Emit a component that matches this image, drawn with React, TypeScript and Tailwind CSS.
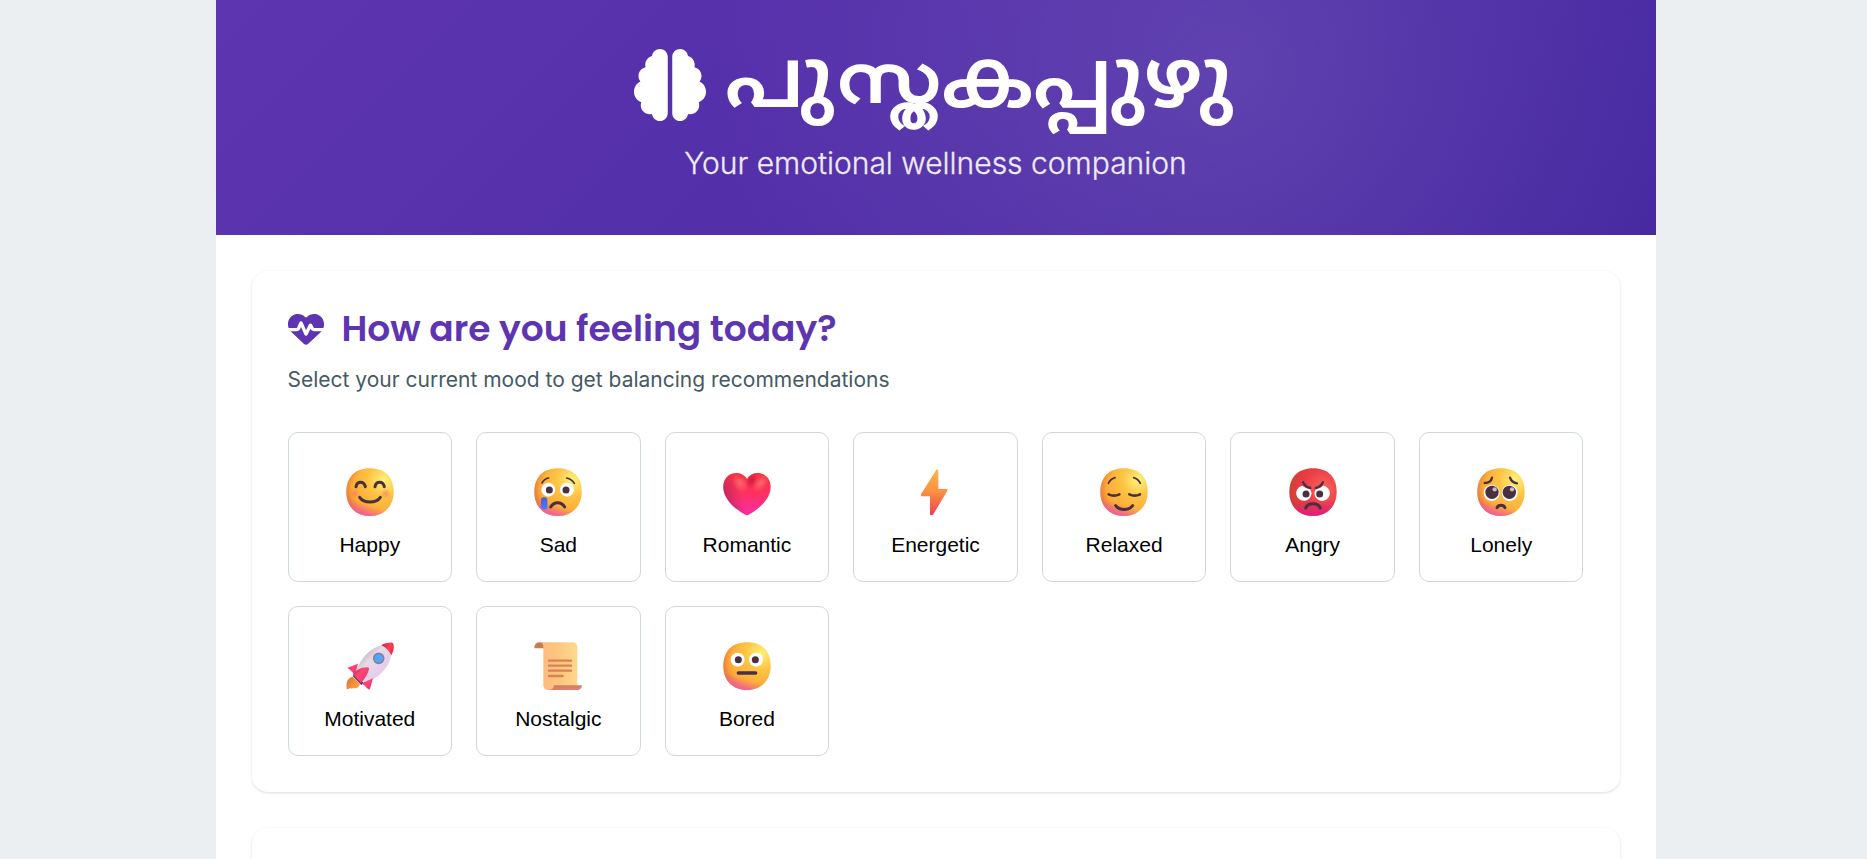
import type { ReactNode } from 'react';
import { FaBrain, FaHeartPulse } from 'react-icons/fa6';

const INK = '#4a2f42';

function Defs() {
  return (
    <svg width="0" height="0" className="absolute">
      <defs>
        <radialGradient id="face" cx="0.8" cy="0.24" r="0.95">
          <stop offset="0" stopColor="#fff27a" />
          <stop offset="0.36" stopColor="#fdc344" />
          <stop offset="0.75" stopColor="#fdaa36" />
          <stop offset="1" stopColor="#ee8c3a" />
        </radialGradient>
        <radialGradient id="angry" cx="0.72" cy="0.42" r="0.75">
          <stop offset="0" stopColor="#f9655a" />
          <stop offset="0.55" stopColor="#ec3d48" />
          <stop offset="1" stopColor="#cf4030" />
        </radialGradient>
        <linearGradient id="chin" x1="0.58" y1="0.7" x2="0.48" y2="1">
          <stop offset="0.3" stopColor="#f0608a" stopOpacity="0" />
          <stop offset="1" stopColor="#f0609c" stopOpacity="0.95" />
        </linearGradient>
        <linearGradient id="angryChin" x1="0.5" y1="0.65" x2="0.5" y2="1">
          <stop offset="0" stopColor="#e0205a" stopOpacity="0" />
          <stop offset="1" stopColor="#e0208a" />
        </linearGradient>
        <radialGradient id="side" cx="0.64" cy="0.45" r="0.68">
          <stop offset="0.74" stopColor="#e0663c" stopOpacity="0" />
          <stop offset="1" stopColor="#dc5f45" stopOpacity="0.6" />
        </radialGradient>
        <radialGradient id="blush">
          <stop offset="0" stopColor="#ff7a68" stopOpacity="0.75" />
          <stop offset="1" stopColor="#ff7a68" stopOpacity="0" />
        </radialGradient>
        <linearGradient id="tear" x1="0" y1="0" x2="0" y2="1">
          <stop offset="0" stopColor="#3f63d8" />
          <stop offset="1" stopColor="#4a78ff" />
        </linearGradient>
        <linearGradient id="heart" x1="0.5" y1="0" x2="0.5" y2="1">
          <stop offset="0" stopColor="#f9343f" />
          <stop offset="0.5" stopColor="#fc3062" />
          <stop offset="1" stopColor="#f82fa8" />
        </linearGradient>
        <radialGradient id="heartGlow">
          <stop offset="0" stopColor="#ff6b70" />
          <stop offset="1" stopColor="#ff5a66" stopOpacity="0" />
        </radialGradient>
        <linearGradient id="heartEdge" x1="0" y1="0.5" x2="0.35" y2="0.4">
          <stop offset="0" stopColor="#b0205a" stopOpacity="0.75" />
          <stop offset="1" stopColor="#c0285a" stopOpacity="0" />
        </linearGradient>
        <radialGradient id="heartDip">
          <stop offset="0" stopColor="#b8163c" stopOpacity="0.75" />
          <stop offset="1" stopColor="#c01840" stopOpacity="0" />
        </radialGradient>
        <linearGradient id="bolt" x1="0.5" y1="0" x2="0.5" y2="1">
          <stop offset="0" stopColor="#fbb84a" />
          <stop offset="0.5" stopColor="#fb8e42" />
          <stop offset="1" stopColor="#ee3f50" />
        </linearGradient>
        <linearGradient id="hull" x1="0.2" y1="0.2" x2="0.8" y2="0.8">
          <stop offset="0" stopColor="#bfb6bd" />
          <stop offset="0.35" stopColor="#e6dbe6" />
          <stop offset="1" stopColor="#e6c8ee" />
        </linearGradient>
        <linearGradient id="fin" x1="0" y1="0" x2="1" y2="0.7">
          <stop offset="0" stopColor="#c92a52" />
          <stop offset="0.5" stopColor="#fb4a70" />
          <stop offset="1" stopColor="#f8258a" />
        </linearGradient>
        <linearGradient id="nose" x1="0" y1="0.3" x2="1" y2="0.7">
          <stop offset="0" stopColor="#cf1f3c" />
          <stop offset="0.55" stopColor="#fb4458" />
          <stop offset="1" stopColor="#e8253f" />
        </linearGradient>
        <linearGradient id="flame" x1="0" y1="0" x2="1" y2="0.6">
          <stop offset="0" stopColor="#e2702c" />
          <stop offset="1" stopColor="#ffa13c" />
        </linearGradient>
        <linearGradient id="paper" x1="0" y1="0.5" x2="1" y2="0.35">
          <stop offset="0" stopColor="#fdb980" />
          <stop offset="0.5" stopColor="#fdc680" />
          <stop offset="1" stopColor="#ffd98c" />
        </linearGradient>
        <linearGradient id="roll" x1="0" y1="0" x2="1" y2="1">
          <stop offset="0" stopColor="#cf7a52" />
          <stop offset="1" stopColor="#e2847c" />
        </linearGradient>
      </defs>
    </svg>
  );
}

const HEAD = 'M72 1C118 1 143 28 143 72C143 117 112 144 72 144C31 144 1 117 1 72C1 28 27 1 72 1Z';

function Glyph({ children }: { children: ReactNode }) {
  return (
    <svg viewBox="0 0 144 144" className="size-12" fill="none" strokeLinecap="round" strokeLinejoin="round">
      {children}
    </svg>
  );
}

function Face({ children }: { children: ReactNode }) {
  return (
    <Glyph>
      <path d={HEAD} fill="url(#face)" />
      <path d={HEAD} fill="url(#side)" />
      <path d={HEAD} fill="url(#chin)" />
      {children}
    </Glyph>
  );
}

const Happy = () => (
  <Face>
    <circle cx="26" cy="77" r="15" fill="url(#blush)" />
    <circle cx="119" cy="77" r="15" fill="url(#blush)" />
    <g stroke={INK} strokeWidth="9">
      <path d="M30 56C33 38 54 38 58 56" />
      <path d="M87 56C90 38 111 38 115 56" />
      <path d="M41 88C54 107 90 107 103 88" />
    </g>
  </Face>
);

const Sad = () => (
  <Face>
    <circle cx="43" cy="65" r="21" fill="#fff" />
    <circle cx="99" cy="65" r="21" fill="#fff" />
    <circle cx="46" cy="66" r="10.5" fill={INK} />
    <circle cx="96" cy="66" r="10.5" fill={INK} />
    <g stroke={INK} strokeWidth="5">
      <path d="M24 45Q31 32 44 30" />
      <path d="M98 30Q113 33 121 46" />
    </g>
    <path d="M50 117C60 100 82 100 92 117" stroke={INK} strokeWidth="9" />
    <rect x="21" y="88" width="19" height="36" rx="8" fill="url(#tear)" />
  </Face>
);

const HEART = 'M72 32C79 21 91 15 104 15C127 15 143 33 143 56C143 92 110 122 76 141Q72 143 68 141C34 122 1 92 1 56C1 33 17 15 40 15C53 15 65 21 72 32Z';
const Romantic = () => (
  <Glyph>
    <path d={HEART} fill="url(#heart)" />
    <path d={HEART} fill="url(#heartEdge)" />
    <clipPath id="heartClip">
      <path d={HEART} />
    </clipPath>
    <g clipPath="url(#heartClip)">
      <ellipse cx="86" cy="36" rx="17" ry="28" fill="url(#heartDip)" transform="rotate(24 86 36)" />
      <ellipse cx="52" cy="46" rx="22" ry="32" fill="url(#heartGlow)" transform="rotate(-35 52 46)" />
      <ellipse cx="114" cy="45" rx="20" ry="32" fill="url(#heartGlow)" transform="rotate(38 114 45)" />
    </g>
  </Glyph>
);

const Energetic = () => (
  <Glyph>
    <path d="M76 5Q78 3 80 5Q82 6 82 9V63H107Q111 64 109 68L67 139Q65 142 61 142Q57 142 57 139V85H32Q28 84 30 79Z" fill="url(#bolt)" />
  </Glyph>
);

const Relaxed = () => (
  <Face>
    <g stroke={INK} strokeWidth="5">
      <path d="M25 46Q31 33 45 29" />
      <path d="M101 29Q115 33 121 46" />
    </g>
    <g stroke={INK} strokeWidth="8">
      <path d="M26 79Q42 87 58 79" />
      <path d="M88 79Q104 87 120 79" />
    </g>
    <path d="M47 113C58 128 86 128 98 113" stroke={INK} strokeWidth="9" />
  </Face>
);

const Angry = () => (
  <Glyph>
    <path d={HEAD} fill="url(#angry)" />
    <path d={HEAD} fill="url(#angryChin)" />
    <path d="M40 53Q50 62 64 64Q70 74 66 84A23 23 0 1 1 40 53Z" fill="#fff" />
    <path d="M103 53Q94 62 80 64Q74 74 78 84A23 23 0 1 0 103 53Z" fill="#fff" />
    <circle cx="51" cy="78" r="10.5" fill={INK} />
    <circle cx="92" cy="78" r="10.5" fill={INK} />
    <g stroke={INK} strokeWidth="7">
      <path d="M42 43Q49 57 64 60" />
      <path d="M102 43Q95 57 80 60" />
    </g>
    <path d="M50 120C58 103 86 103 94 120" stroke={INK} strokeWidth="9" />
  </Glyph>
);

const Lonely = () => (
  <Face>
    <circle cx="44" cy="75" r="24" fill="#fff" />
    <circle cx="98" cy="75" r="24" fill="#fff" />
    <circle cx="45" cy="73" r="20" fill={INK} />
    <circle cx="97" cy="73" r="20" fill={INK} />
    <circle cx="53" cy="64" r="6.5" fill="#c9b9c4" />
    <circle cx="105" cy="64" r="6.5" fill="#c9b9c4" />
    <g stroke={INK} strokeWidth="7">
      <path d="M23 45Q42 44 45 29" />
      <path d="M99 29Q104 44 120 46" />
    </g>
    <path d="M60 119C64 109 80 109 84 119" stroke={INK} strokeWidth="9" />
  </Face>
);

const Motivated = () => (
  <Glyph>
    <path d="M2 142C0 118 5 108 20 104L42 126C38 138 30 141 22 137Q18 142 12 138Q8 142 2 142Z" fill="url(#flame)" />
    <path d="M20 102L46 129L54 124L26 96Z" fill="#4a3a78" />
    <path d="M106 10C75 18 45 45 28 92L56 121C95 112 128 80 136 40Q126 20 106 10Z" fill="url(#hull)" />
    <path d="M106 10C118 2 134 0 140 3C145 7 145 24 136 40Q126 20 106 10Z" fill="url(#nose)" />
    <path d="M5 77L36 65L27 98Z" fill="url(#fin)" />
    <path d="M81 109L72 140Q69 144 66 141L48 124Z" fill="url(#fin)" />
    <path d="M20 97Q34 77 62 76Q71 76 69 82Q63 104 45 123Z" fill="url(#fin)" />
    <circle cx="98" cy="49" r="17.5" fill="#85809a" />
    <circle cx="98" cy="49" r="12.5" fill="#50a5ff" />
  </Glyph>
);

const Nostalgic = () => (
  <Glyph>
    <path d="M3 19Q1 19 1 15C2 6 8 1 18 1L30 4V19Z" fill="#c97b55" />
    <path d="M16 1H116C124 1 130 7 130 15V136L60 144H42C33 144 28 138 28 130V14C28 6 24 1 16 1Z" fill="url(#paper)" />
    <path d="M60 130H142Q145 130 144 133C142 140 137 144 130 144H42C55 144 60 138 60 130Z" fill="url(#roll)" />
    <path d="M45 56H111M45 71H111M45 86H111M45 102H86" stroke="#d98253" strokeWidth="7" />
  </Glyph>
);

const Bored = () => (
  <Face>
    <circle cx="44" cy="53" r="21" fill="#fff" />
    <circle cx="99" cy="53" r="21" fill="#fff" />
    <circle cx="46" cy="53" r="10.5" fill={INK} />
    <circle cx="97" cy="53" r="10.5" fill={INK} />
    <path d="M46 93H98" stroke={INK} strokeWidth="10" />
  </Face>
);

const moods = [
  { label: 'Happy', Icon: Happy },
  { label: 'Sad', Icon: Sad },
  { label: 'Romantic', Icon: Romantic },
  { label: 'Energetic', Icon: Energetic },
  { label: 'Relaxed', Icon: Relaxed },
  { label: 'Angry', Icon: Angry },
  { label: 'Lonely', Icon: Lonely },
  { label: 'Motivated', Icon: Motivated },
  { label: 'Nostalgic', Icon: Nostalgic },
  { label: 'Bored', Icon: Bored },
];

const card = 'rounded-2xl bg-white p-9 shadow-[0_1px_3px_rgba(0,0,0,0.14)]';

export default function App() {
  return (
    <div className="h-[859px] overflow-hidden bg-[#eceff1] font-['Inter',sans-serif]">
      <Defs />
      <div className="ml-[215.5px] h-full w-[1440px] bg-white">
        <header className="flex h-[235px] flex-col items-center bg-[radial-gradient(circle_at_70%_30%,rgba(255,255,255,0.1)_0%,transparent_50%),linear-gradient(135deg,#5e35b1,#4527a0)] pt-12 text-white">
          <h1 className="flex h-[73px] w-[603px] items-center gap-[18px]">
            <FaBrain className="size-[72px] shrink-0" />
            <span className="flex h-[73px] items-center pt-1.5 pl-px font-['Noto_Sans_Malayalam',sans-serif] text-[83px] leading-none font-semibold whitespace-nowrap">
              <span>പു</span>
              <span className="flex w-[108px] justify-center pb-3 font-['FreeSans','Manjari',sans-serif] text-[66px] font-bold [-webkit-text-stroke:1.5px_white]">
                <span className="scale-x-[1.18]">സ്ത</span>
              </span>
              <span>കപ്പുഴു</span>
            </span>
          </h1>
          <p className="mt-6 text-[30px] leading-9 font-light opacity-90 [-webkit-text-stroke:0.3px_white]">Your emotional wellness companion</p>
        </header>
        <main className="flex flex-col gap-9 p-9">
          <section className={card}>
            <h2 className="flex h-[43px] items-center gap-[18px] font-['Poppins',sans-serif] text-[36px] leading-[43px] font-semibold text-[#5e35b1]">
              <FaHeartPulse className="size-9" />
              <span>How are you feeling today?</span>
            </h2>
            <p className="mt-[14px] text-[21px] leading-8 text-[#455a64]">Select your current mood to get balancing recommendations</p>
            <div className="mt-9 grid grid-cols-7 gap-6">
              {moods.map(({ label, Icon }) => (
                <button
                  key={label}
                  type="button"
                  className="flex h-[150px] flex-col items-center rounded-[10px] border border-[#cfd8dc] bg-white pt-[35px] font-['Liberation_Sans',sans-serif] text-[21px] leading-6 text-black"
                >
                  <Icon />
                  <span className="mt-[17px]">{label}</span>
                </button>
              ))}
            </div>
          </section>
          <section className={`${card} h-[200px]`} />
        </main>
      </div>
    </div>
  );
}
